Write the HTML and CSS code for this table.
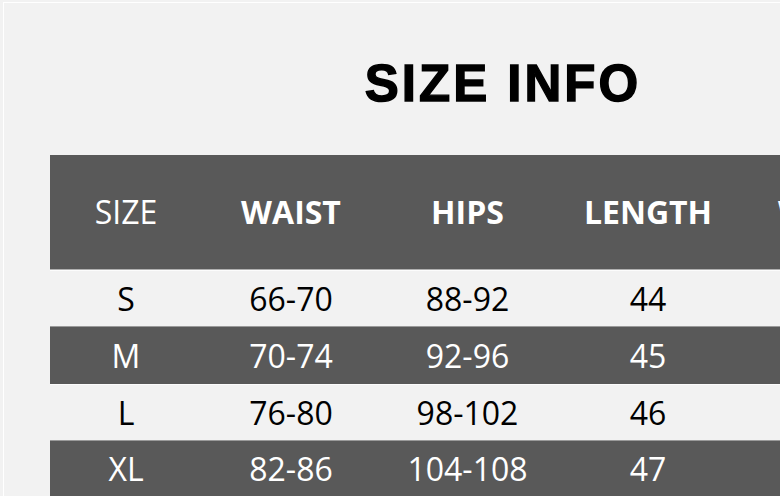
FILE: index.html
```html
<!DOCTYPE html>
<html>
<head>
<meta charset="utf-8">
<link rel="stylesheet" href="styles.css">
</head>
<body>
<div class="frame">
  <h1 class="title">SIZE INFO</h1>
  <div class="table">
    <div class="row head">
      <div class="cell c1 light">SIZE</div>
      <div class="cell c2">WAIST</div>
      <div class="cell c3">HIPS</div>
      <div class="cell c4">LENGTH</div>
      <div class="cell c5 left">WEIGHT</div>
    </div>
    <div class="row lt r1">
      <div class="cell c1">S</div>
      <div class="cell c2">66-70</div>
      <div class="cell c3">88-92</div>
      <div class="cell c4">44</div>
      <div class="cell c5"></div>
    </div>
    <div class="row dk r2">
      <div class="cell c1">M</div>
      <div class="cell c2">70-74</div>
      <div class="cell c3">92-96</div>
      <div class="cell c4">45</div>
      <div class="cell c5"></div>
    </div>
    <div class="row lt r3">
      <div class="cell c1">L</div>
      <div class="cell c2">76-80</div>
      <div class="cell c3">98-102</div>
      <div class="cell c4">46</div>
      <div class="cell c5"></div>
    </div>
    <div class="row dk r4">
      <div class="cell c1">XL</div>
      <div class="cell c2">82-86</div>
      <div class="cell c3">104-108</div>
      <div class="cell c4">47</div>
      <div class="cell c5"></div>
    </div>
  </div>
</div>
</body>
</html>
```
FILE: styles.css
```css
html, body {
  margin: 0;
  padding: 0;
  background: #f2f2f2;
  overflow: hidden;
  width: 780px;
  height: 496px;
}
.frame {
  margin: 2px 0 0 3px;
  border-top: 1px solid #ffffff;
  border-left: 1px solid #ffffff;
  width: 776px;
  height: 493px;
  overflow: hidden;
}
.title {
  margin: 56px 0 0 -1px;
  width: 1000px;
  text-align: center;
  font-family: "Liberation Sans", Arial, sans-serif;
  font-weight: 700;
  font-size: 51px;
  line-height: 50px;
  letter-spacing: 3px;
  color: #000;
  -webkit-text-stroke: 1.4px #000;
}
.table {
  margin: 46px 0 0 46px;
  width: 1000px;
  display: flex;
  flex-direction: column;
  font-family: "Open Sans", "Noto Sans", sans-serif;
  font-size: 32px;
  font-weight: 500;
}
.row {
  display: grid;
  grid-template-columns: 152px 178px 175px 186px 240px;
  align-items: center;
}
.head {
  height: 114px;
  background: #595959;
  color: #fff;
  font-weight: 700;
  border-bottom: 1px solid #b0b0b0;
}
.head .light {
  font-weight: 400;
}
.lt {
  background: #f2f2f2;
  color: #000;
  border-top: 1px solid #fcfcfc;
}
.dk {
  background: #595959;
  color: #fff;
  border-top: 1px solid #9a9a9a;
}
.r1 { height: 55px; }
.r2 { height: 57px; }
.r3 { height: 55px; }
.r4 { height: 55px; }
.cell {
  text-align: center;
  white-space: nowrap;
  line-height: 40px;
}
.left {
  text-align: left;
  padding-left: 37px;
}
```
